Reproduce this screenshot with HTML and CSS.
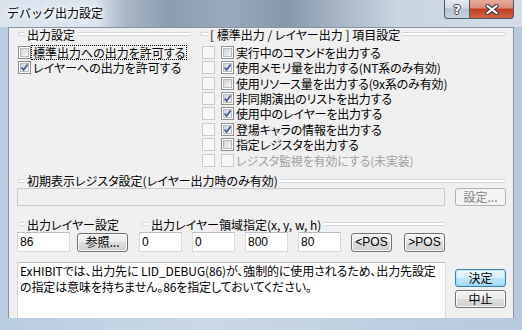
FILE: index.html
```html
<!DOCTYPE html>
<html lang="ja">
<head>
  <meta charset="UTF-8" />
  <title>デバッグ出力設定</title>
  <link rel="stylesheet" href="styles.css">
</head>
<body>
  <div class="window">
    <div class="titlebar">
      <span class="title">デバッグ出力設定</span>
      <div class="caps">
        <span class="cap help">?</span>
        <span class="cap close">
          <svg width="14" height="11" viewBox="0 0 14 11">
            <path d="M2.5 2 L11.5 9 M11.5 2 L2.5 9" stroke="#3b3f46" stroke-width="4.2" stroke-linecap="round"/>
            <path d="M2.5 2 L11.5 9 M11.5 2 L2.5 9" stroke="#fff" stroke-width="2.2" stroke-linecap="round"/>
          </svg>
        </span>
      </div>
    </div>

    <div class="client">
      <div class="top">
        <div class="col">
          <div class="gtitle"><span>出力設定</span></div>
          <div class="rows">
            <div class="row"><span class="cb"></span><span class="lbl focus">標準出力への出力を許可する</span></div>
            <div class="row"><span class="cb on"><svg viewBox="0 0 9 9"><path d="M1.6 4.6 L3.6 7 L7.6 1.6"/></svg></span><span class="lbl">レイヤーへの出力を許可する</span></div>
          </div>
        </div>
        <div class="col right">
          <div class="gtitle"><span>[ 標準出力 / レイヤー出力 ] 項目設定</span></div>
          <div class="rows">
            <div class="row"><span class="cb off"></span><span class="cb"></span><span class="lbl">実行中のコマンドを出力する</span></div>
            <div class="row"><span class="cb off"></span><span class="cb on"><svg viewBox="0 0 9 9"><path d="M1.6 4.6 L3.6 7 L7.6 1.6"/></svg></span><span class="lbl">使用メモリ量を出力する(NT系のみ有効)</span></div>
            <div class="row"><span class="cb off"></span><span class="cb"></span><span class="lbl">使用リソース量を出力する(9x系のみ有効)</span></div>
            <div class="row"><span class="cb off"></span><span class="cb on"><svg viewBox="0 0 9 9"><path d="M1.6 4.6 L3.6 7 L7.6 1.6"/></svg></span><span class="lbl">非同期演出のリストを出力する</span></div>
            <div class="row"><span class="cb off"></span><span class="cb on"><svg viewBox="0 0 9 9"><path d="M1.6 4.6 L3.6 7 L7.6 1.6"/></svg></span><span class="lbl">使用中のレイヤーを出力する</span></div>
            <div class="row"><span class="cb off"></span><span class="cb on"><svg viewBox="0 0 9 9"><path d="M1.6 4.6 L3.6 7 L7.6 1.6"/></svg></span><span class="lbl">登場キャラの情報を出力する</span></div>
            <div class="row"><span class="cb off"></span><span class="cb"></span><span class="lbl">指定レジスタを出力する</span></div>
            <div class="row"><span class="cb off"></span><span class="cb off"></span><span class="lbl dim">レジスタ監視を有効にする(未実装)</span></div>
          </div>
        </div>
      </div>

      <div class="gtitle reghead"><span>初期表示レジスタ設定(レイヤー出力時のみ有効)</span></div>
      <div class="regrow">
        <div class="edit dis"></div>
        <button class="btn" disabled>設定...</button>
      </div>

      <div class="layer">
        <div class="lgroup first">
          <div class="gtitle"><span>出力レイヤー設定</span></div>
          <div class="lrow">
            <div class="edit w53">86</div>
            <button class="btn">参照...</button>
          </div>
        </div>
        <div class="lgroup second">
          <div class="gtitle"><span>出力レイヤー領域指定(x, y, w, h)</span></div>
          <div class="lrow">
            <div class="edit">0</div>
            <div class="edit">0</div>
            <div class="edit">800</div>
            <div class="edit">80</div>
            <button class="btn pos">&lt;POS</button>
            <button class="btn pos">&gt;POS</button>
          </div>
        </div>
      </div>

      <div class="bottom">
        <div class="memo">ExHIBITでは、出力先に LID_DEBUG(86)が、強制的に使用されるため、出力先設定<br>の指定は意味を持ちません。86を指定しておいてください。</div>
        <div class="actions">
          <button class="btn default">決定</button>
          <button class="btn">中止</button>
        </div>
      </div>
    </div>
  </div>
</body>
</html>
```

FILE: styles.css
```css
body {
  margin: 0;
  font-family: "Noto Sans CJK JP", sans-serif;
  font-size: 12px;
  color: #000;
}
.window {
  width: 522px;
  height: 330px;
  display: flex;
  flex-direction: column;
  overflow: hidden;
  background: linear-gradient(90deg, #b9cde2, #c9d8e7 40%, #bfd0e2 70%, #b6c9dd);
}
.titlebar {
  height: 27px;
  flex: none;
  display: flex;
  align-items: flex-start;
  background: linear-gradient(90deg, #d9e4ef 0%, #dbe5ef 18%, #a9b8c8 24%, #8c9db1 32%, #9aaabd 44%, #8697ab 55%, #aab9c9 66%, #c8d5e2 76%, #d2dde8 100%);
}
.title {
  padding: 5px 0 0 7px;
  line-height: 16px;
  text-shadow: 0 0 5px #fff, 0 0 8px #fff, 0 0 10px #fff;
}
.caps {
  margin-left: auto;
  margin-right: 8px;
  display: flex;
}
.cap {
  height: 19px;
  box-sizing: border-box;
  display: flex;
  align-items: center;
  justify-content: center;
  border: 1px solid #4d5663;
  border-top: none;
}
.help {
  width: 26px;
  border-radius: 0 0 0 4px;
  background: linear-gradient(#e5ebf1, #d0d9e2 45%, #b3c0ce 50%, #c9d5e1);
  font-family: "DejaVu Sans", sans-serif;
  font-weight: bold;
  font-size: 13px;
  color: #fff;
  text-shadow: 1px 0 0 #3b3f46, -1px 0 0 #3b3f46, 0 1px 0 #3b3f46, 0 -1px 0 #3b3f46;
}
.close {
  width: 44px;
  border-left: none;
  border-radius: 0 0 4px 0;
  background: linear-gradient(#e9ab9c, #dc8a78 45%, #c43b1e 50%, #d2613f 95%);
}
.client {
  height: 291px;
  flex: none;
  margin: 0 8px;
  box-sizing: border-box;
  border: 1px solid #8593a4;
  border-bottom: none;
  background: #f0f0f0;
  padding: 0 7px 0 8px;
  display: flex;
  flex-direction: column;
  overflow: hidden;
}
.top {
  display: grid;
  grid-template-columns: 174px 306px;
  column-gap: 8px;
  padding-left: 1px;
}

/* group box (only its top edge is visible) */
.gtitle {
  display: flex;
  align-items: center;
  height: 15px;
  line-height: 15px;
  white-space: nowrap;
  font-feature-settings: "palt";
}
.top .gtitle {
  margin-top: -1.5px;
}
.gtitle::before,
.gtitle::after {
  content: "";
  height: 4px;
  box-sizing: border-box;
  border: 1px solid #d0d9e0;
  background: #fff;
}
.gtitle::before {
  width: 7px;
  border-right: none;
  border-radius: 3px 0 0 3px;
}
.gtitle::after {
  flex: 1;
  border-left: none;
  border-radius: 0 3px 3px 0;
}
.gtitle span {
  padding: 0 2px;
}
.right .gtitle::before {
  width: 8px;
}

.rows {
  margin-top: 3.1px;
}
.row {
  height: 15.4px;
  display: flex;
  align-items: center;
  white-space: nowrap;
}
.right .row {
  padding-left: 2px;
}
.lbl {
  margin-left: 2px;
  line-height: 15px;
  font-feature-settings: "palt";
}
.right .lbl {
  letter-spacing: -0.15px;
}
.lbl.focus {
  margin-left: 1px;
  padding: 0 1px;
  line-height: 13px;
  outline: 1px dotted #000;
}
.lbl.dim {
  color: #a0a0a0;
}

/* checkbox */
.cb {
  width: 13px;
  height: 13px;
  flex: none;
  box-sizing: border-box;
  display: grid;
  padding: 1px;
  border: 1px solid #8e8f8f;
  background: #fff;
}
.cb::before {
  content: "";
  grid-area: 1 / 1;
  border: 1px solid #b8bcc1;
  background: linear-gradient(135deg, #cfd3d8, #f7f7f7);
}
.cb svg {
  grid-area: 1 / 1;
  width: 9px;
  height: 9px;
}
.cb svg path {
  fill: none;
  stroke: #3f55a0;
  stroke-width: 1.7;
}
.cb + .cb {
  margin-left: 6px;
}
.cb.off {
  border-color: #cacaca;
  background: #f7f7f7;
}
.cb.off::before {
  border: none;
  background: none;
}

/* edits and buttons */
.edit {
  width: 43px;
  height: 20px;
  box-sizing: border-box;
  border: 1px solid #d6d9de;
  border-top-color: #b9bcc2;
  background: #fff;
  padding-left: 2px;
  line-height: 18px;
  font-family: "Liberation Sans", "Noto Sans CJK JP", sans-serif;
}
.edit.w53 {
  width: 53px;
}
.edit.dis {
  width: 428px;
  height: 18px;
  background: #f0f0f0;
  border-color: #c8cbd0;
}
.btn {
  width: 51px;
  height: 19px;
  box-sizing: border-box;
  padding: 0;
  margin: 0;
  border: 1px solid #707070;
  border-radius: 3px;
  background: linear-gradient(#f3f3f3, #ebebeb 50%, #dddddd 50%, #cfcfcf);
  box-shadow: inset 0 0 0 1px #fbfbfb;
  font-family: "Noto Sans CJK JP", sans-serif;
  font-size: 12px;
  line-height: 16px;
  color: #000;
}
.btn:disabled {
  border-color: #adb2b5;
  background: #f4f4f4;
  box-shadow: none;
  color: #838383;
}
.btn.default {
  border-color: #3c7fb1;
  background: linear-gradient(#eaf6fd, #d9f0fc 50%, #bee6fd 50%, #a7d9f5);
  box-shadow: inset 0 0 0 1px #48d8fb40;
}
.btn.pos {
  width: 41px;
  font-family: "Liberation Sans", sans-serif;
}

.reghead {
  margin: 5.7px 0 0 1px;
}
.regrow {
  display: flex;
  gap: 10px;
}
.regrow .btn {
  height: 18px;
}

.layer {
  display: flex;
  margin-top: 10.5px;
}
.lgroup.first .gtitle {
  margin: 0 4px 0 1px;
}
.lgroup.second {
  margin-left: 11px;
}
.lgroup.second .gtitle {
  margin-left: 3px;
}
.lrow {
  display: flex;
  align-items: center;
  gap: 10px;
  margin-top: 0.5px;
}
.lgroup.first .lrow {
  gap: 7px;
}
.lrow .btn.pos + .btn.pos {
  margin-left: 2px;
}

.bottom {
  flex: 1;
  display: flex;
  gap: 9px;
  margin-top: 10px;
}
.memo {
  width: 429px;
  box-sizing: border-box;
  border: 1px solid #d6d9de;
  border-top-color: #b9bcc2;
  border-bottom: none;
  background: #fff;
  padding: 0 2px;
  line-height: 16px;
  white-space: nowrap;
  letter-spacing: -0.12px;
  font-feature-settings: "palt";
}
.actions {
  width: 51px;
  padding-top: 7px;
  display: flex;
  flex-direction: column;
  gap: 3px;
}
.actions .btn {
  height: 18px;
}
```
